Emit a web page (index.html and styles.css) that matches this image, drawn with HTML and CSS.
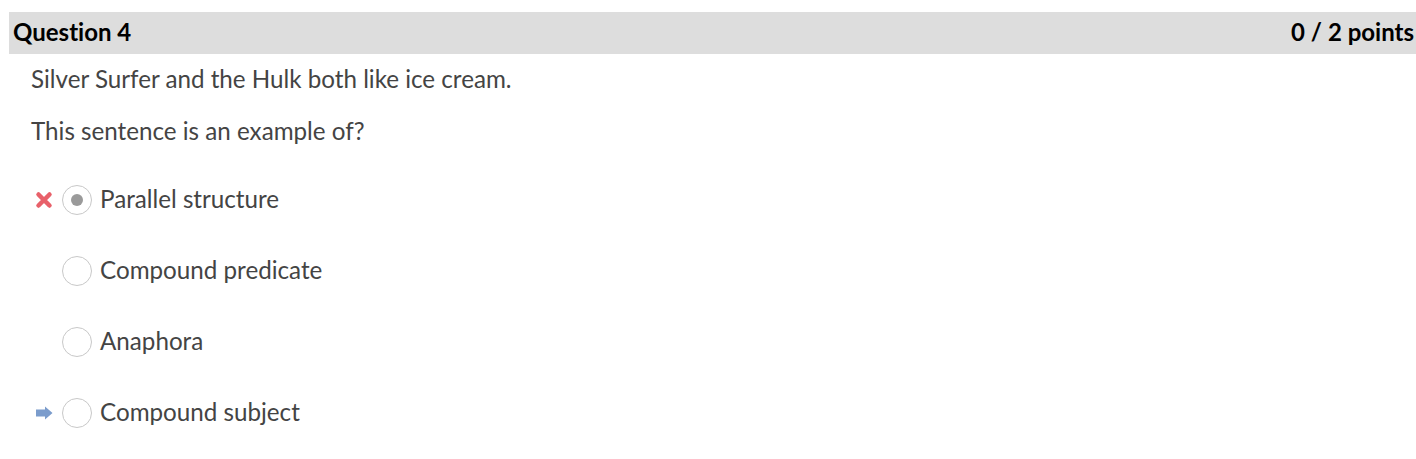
FILE: index.html
```html
<!DOCTYPE html>
<html>
<head>
<meta charset="utf-8">
<link rel="stylesheet" href="styles.css">
</head>
<body>
<div class="question">
  <div class="header">
    <span class="title">Question 4</span>
    <span class="points">0 / 2 points</span>
  </div>
  <div class="content">
    <p class="text first">Silver Surfer and the Hulk both like ice cream.</p>
    <p class="text">This sentence is an example of?</p>
    <div class="answers">
      <div class="answer">
        <span class="mark">
          <svg width="18" height="18" viewBox="0 0 18 18"><path d="M3.5 3.5 L14.5 14.5 M14.5 3.5 L3.5 14.5" stroke="#e8616a" stroke-width="4.5" stroke-linecap="round"/></svg>
        </span>
        <span class="radio selected"><span class="dot"></span></span>
        <span class="label">Parallel structure</span>
      </div>
      <div class="answer">
        <span class="mark"></span>
        <span class="radio"></span>
        <span class="label">Compound predicate</span>
      </div>
      <div class="answer">
        <span class="mark"></span>
        <span class="radio"></span>
        <span class="label">Anaphora</span>
      </div>
      <div class="answer">
        <span class="mark">
          <svg width="18" height="14" viewBox="0 0 18 14"><path d="M1 3.5 H10 V0.5 L17.5 7 L10 13.5 V10.5 H1 Z" fill="#7b9ccc"/></svg>
        </span>
        <span class="radio"></span>
        <span class="label">Compound subject</span>
      </div>
    </div>
  </div>
</div>
</body>
</html>
```

FILE: styles.css
```css
html, body {
  margin: 0;
  padding: 0;
  background: #fff;
}
body {
  font-family: Lato, "Open Sans", sans-serif;
  font-variant-ligatures: none;
  overflow: hidden;
}
.question {
  padding-top: 12px;
  padding-left: 9px;
}
.header {
  display: flex;
  justify-content: space-between;
  align-items: center;
  height: 42px;
  box-sizing: border-box;
  padding: 0 2px 2px 4px;
  background: #dddddd;
  font-weight: bold;
  font-size: 24px;
  line-height: 40px;
  color: #000;
}
.content {
  padding-left: 22px;
  color: #444;
  font-size: 24.2px;
}
.text {
  margin: 0;
  line-height: 28px;
}
.text.first {
  margin-top: 11px;
}
.text + .text {
  margin-top: 24px;
}
.answers {
  display: flex;
  flex-direction: column;
  gap: 41px;
  margin-top: 40px;
}
.answer {
  display: flex;
  align-items: center;
  height: 30px;
}
.mark {
  width: 31px;
  display: flex;
  align-items: center;
  padding-left: 4px;
  box-sizing: border-box;
}
.radio {
  width: 30px;
  height: 30px;
  box-sizing: border-box;
  border: 1px solid #c8c8c8;
  border-radius: 50%;
  background: #fff;
  display: flex;
  align-items: center;
  justify-content: center;
  margin-right: 8px;
}
.dot {
  width: 12px;
  height: 12px;
  border-radius: 50%;
  background: #9a9a9a;
}
.label {
  line-height: 30px;
  margin-top: -2px;
}
```
